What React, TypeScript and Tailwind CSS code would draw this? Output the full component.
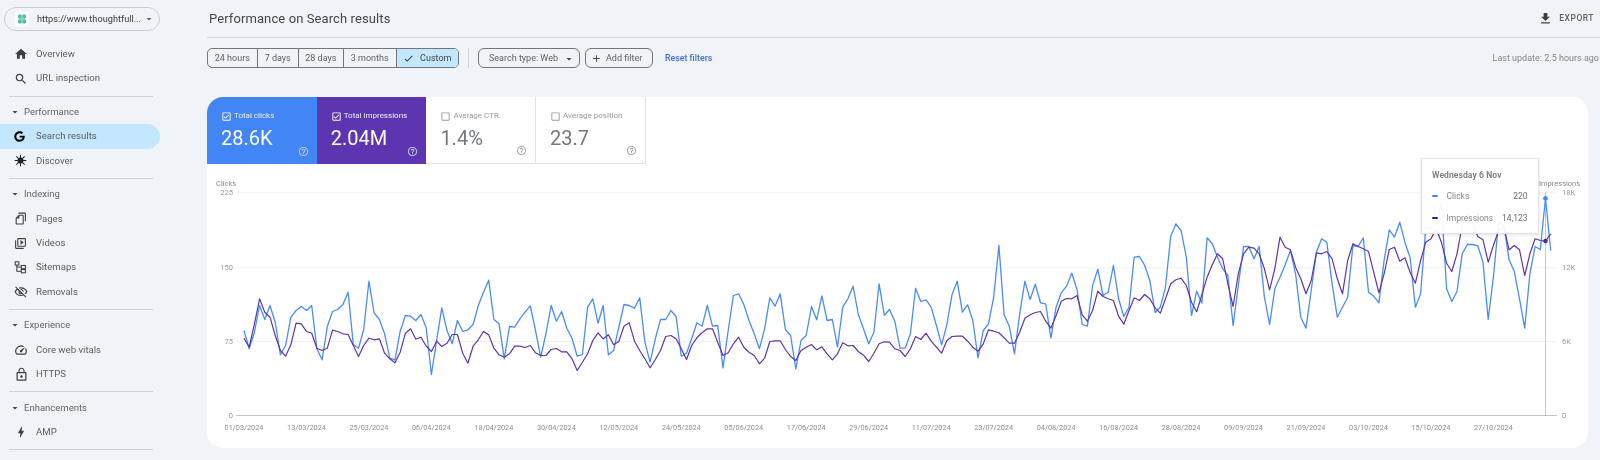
import React from "react";
import {
  MdHome, MdSearch, MdOutlineFileCopy, MdOutlineVideoLibrary, MdOutlineVisibilityOff, MdOutlineSpeed,
  MdLockOutline, MdBolt, MdArrowDropDown, MdFileDownload, MdHelpOutline, MdCheck, MdAdd,
  MdOutlineCheckBox, MdCheckBoxOutlineBlank,
} from "react-icons/md";
import { FaGoogle } from "react-icons/fa";

const blue = [
  { start: 0, ys: [480,535,485,405,447,405,455,553,525,440,420,408,420,405,535,568,468,423,417,402,365,522,533,478,332,427,447,490,563,568,482,435,437,450,432,472,612,510,412,480,520,450,483,478,462,405,365,329,447,460,565,468,470,445,425,406,480,560,490] },
  { start: 59, ys: [405,452,423,473,503,557,552,410,385,458,405,553,540,470,402,405,413,382,515,575,505,447,447,420,438,557,548,505,457,467,405,467,465,592,480,375,370,402,450,490,535,475,382,407,370,477,495,595,510,495,408,448,376,450,447,530,410,385,347,432,475,520,485,340,434,417,452] },
  { start: 126, ys: [533,533,490,353,393,388,410,465,523,463,373,332,425,403,450,562,480,460,380,225,433,467,550,430,332,387,341,397,400,503,410,367,347,308,357,462,467,345,296,375,365,285,385,438,410,260,258,284,330,426,410,350,198,160,180,260,435,362,398,202,220,260,295,315,465,345,228,228] },
  { start: 194, ys: [265,228,380,462,355,320,283,240,310,440,473,360,245,205,215,340,440,410,380,225,228,202,365,377,397,270,178,200,155,215,262,410,370,172,172,165,100,355,393,363,250,222,222,226,275,447,320,155,165,268,303,385,473,310,228,237,83,240] },
];
const purple = [
  { start: 0, ys: [503,530,460,385,425,440,495,540,557,522,458,460,483,488,533,540,533,479,483,490,492,525,558,525,503,508,505,548,565,577,545,488,475,506,500,527,543,512,528,518,492,492,548,578,527,508,483,493,533,553,560,550,527,527,531,525,547,555,555] },
  { start: 59, ys: [537,534,544,544,565,600,575,550,510,487,505,493,523,513,467,457,512,540,565,592,567,540,498,495,505,535,567,525,502,487,475,475,515,555,547,520,500,530,545,555,580,563,513,511,511,537,558,570,540,530,522,538,529,550,568,550,517,526,525,543,554,573,548,520,514,515,535] },
  { start: 126, ys: [540,558,535,498,507,488,512,530,548,511,498,497,497,512,530,542,520,478,482,487,502,518,518,485,443,433,426,423,452,473,435,392,384,385,375,433,452,420,362,378,385,390,437,461,420,382,390,372,385,412,428,385,340,328,323,345,395,424,372,320,283,250,265,340,408,310,250,230] },
  { start: 194, ys: [233,250,295,358,295,200,230,238,290,325,370,330,247,250,243,265,325,370,270,220,228,235,243,305,367,310,237,230,272,262,305,338,270,215,205,175,215,278,303,250,165,130,160,198,208,275,225,180,170,238,225,238,315,250,205,210,212,190] },
];

const toPoints = (segs: typeof blue) =>
  segs
    .flatMap((s) => s.ys.map((y, i) => `${(244 + 5.206 * (s.start + i)).toFixed(1)},${(170 + y / 3).toFixed(1)}`))
    .join(" ");

const dates = ["01/03/2024","13/03/2024","25/03/2024","06/04/2024","18/04/2024","30/04/2024","12/05/2024","24/05/2024","05/06/2024","17/06/2024","29/06/2024","11/07/2024","23/07/2024","04/08/2024","16/08/2024","28/08/2024","09/09/2024","21/09/2024","03/10/2024","15/10/2024","27/10/2024"];
const grid = [
  { y: 192.3, l: "225", r: "18K" },
  { y: 267.3, l: "150", r: "12K" },
  { y: 341, l: "75", r: "6K" },
  { y: 415, l: "0", r: "0" },
];

function SitemapIcon() {
  return (
    <svg viewBox="0 0 16 16" className="w-[13px] h-[13px]" fill="none" stroke="#3c4043" strokeWidth="1.3">
      <rect x="1.5" y="1" width="4.5" height="4" />
      <rect x="9" y="5.5" width="5" height="4" />
      <rect x="9" y="10.5" width="5" height="4" />
      <path d="M3.5 5v7.5H9M3.5 7.5H9" />
    </svg>
  );
}

function DiscoverIcon() {
  return (
    <svg viewBox="0 0 16 16" className="w-[13px] h-[13px]" fill="none" stroke="#222" strokeWidth="1.3">
      <path d="M8 .8v14.4M.8 8h14.4M2.9 2.9l10.2 10.2M13.1 2.9 2.9 13.1" />
      <circle cx="8" cy="8" r="3.6" fill="#222" stroke="none" />
    </svg>
  );
}

function Logo() {
  return (
    <svg viewBox="0 0 14 14" className="w-[14px] h-[14px] shrink-0 bg-white rounded-[2px]">
      <rect x="3" y="2.5" width="3.8" height="4.2" rx="1.3" fill="#55bfa6" />
      <rect x="7.2" y="2.5" width="3.8" height="4.2" rx="1.3" fill="#55bfa6" />
      <rect x="3" y="7.3" width="3.8" height="4.2" rx="1.3" fill="#55bfa6" />
      <rect x="7.2" y="7.3" width="3.8" height="4.2" rx="1.3" fill="#55bfa6" />
      <rect x="5.6" y="5.6" width="2.8" height="2.8" fill="#8fd8c6" />
    </svg>
  );
}

function NavRow({ icon, label, active }: { icon: React.ReactNode; label: string; active?: boolean }) {
  return (
    <div className={`h-[24.35px] w-[160px] flex items-center rounded-r-full text-[9.6px] text-[#5a5e63] ${active ? "bg-[#c2e7ff]" : ""}`}>
      <span className="w-[36px] pl-[14px] flex items-center text-[#3c4043]">{icon}</span>
      <span>{label}</span>
    </div>
  );
}

function Section({ label }: { label: string }) {
  return (
    <div className="h-[24.35px] flex items-center text-[9.5px] text-[#62666b]">
      <span className="w-[24px] pl-[9px] flex items-center"><MdArrowDropDown className="w-[12px] h-[12px] text-[#444]" /></span>
      <span>{label}</span>
    </div>
  );
}

function Divider() {
  return (
    <div className="h-[9.25px] pt-[5px] pl-[9px]">
      <div className="w-[144px] h-px bg-[#cfd2d6]" />
    </div>
  );
}

function Metric({ label, value, on, bg, border }: { label: string; value: string; on: boolean; bg: string; border: string }) {
  return (
    <div className={`relative h-[66.5px] w-[109.7px] pl-[14px] pt-[13px] ${bg} ${border}`}>
      <div className={`flex items-center gap-[2px] text-[8px] leading-[12px] ${on ? "text-[#eef2ff]" : "text-[#9a9a9a]"}`}>
        {on ? <MdOutlineCheckBox className="w-[11px] h-[11px] text-white" /> : <MdCheckBoxOutlineBlank className="w-[11px] h-[11px] text-[#9a9a9a]" />}
        <span>{label}</span>
      </div>
      <div className={`mt-[3px] text-[20px] leading-[26px] ${on ? "text-white" : "text-[#75787b]"}`}>{value}</div>
      <MdHelpOutline className={`absolute right-[8px] bottom-[7px] w-[11px] h-[11px] ${on ? "text-[#c5d3f5]" : "text-[#a5a5a5]"}`} />
    </div>
  );
}

export default function App() {
  return (
    <div className="flex w-[1600px] h-[460px] overflow-hidden bg-[#f0f4f9] font-['Roboto',sans-serif] blur-[0.35px]">
      <aside className="w-[207px] shrink-0 pt-[7px]">
        <div className="ml-[4px] w-[156px] h-[24px] rounded-full border border-[#c9ccd0] flex items-center pl-[10px] text-[9.2px] text-[#3c4043]">
          <Logo />
          <span className="ml-[8px] whitespace-nowrap">https://www.thoughtfull...</span>
          <MdArrowDropDown className="ml-[2px] w-[12px] h-[12px] text-[#666]" />
        </div>
        <nav className="mt-[11px]">
          <NavRow icon={<MdHome className="w-[14px] h-[14px]" />} label="Overview" />
          <NavRow icon={<MdSearch className="w-[14px] h-[14px]" />} label="URL inspection" />
          <Divider />
          <Section label="Performance" />
          <NavRow active icon={<FaGoogle className="w-[11px] h-[11px] text-black" />} label="Search results" />
          <NavRow icon={<DiscoverIcon />} label="Discover" />
          <Divider />
          <Section label="Indexing" />
          <NavRow icon={<MdOutlineFileCopy className="w-[13px] h-[13px] -scale-x-100" />} label="Pages" />
          <NavRow icon={<MdOutlineVideoLibrary className="w-[13px] h-[13px]" />} label="Videos" />
          <NavRow icon={<SitemapIcon />} label="Sitemaps" />
          <NavRow icon={<MdOutlineVisibilityOff className="w-[14px] h-[14px]" />} label="Removals" />
          <Divider />
          <Section label="Experience" />
          <NavRow icon={<MdOutlineSpeed className="w-[14px] h-[14px]" />} label="Core web vitals" />
          <NavRow icon={<MdLockOutline className="w-[15px] h-[15px]" />} label="HTTPS" />
          <Divider />
          <Section label="Enhancements" />
          <NavRow icon={<MdBolt className="w-[14px] h-[14px]" />} label="AMP" />
          <Divider />
        </nav>
      </aside>

      <main className="flex-1 min-w-0">
        <header className="h-[38px] border-b border-[#d5d8dc] flex items-center justify-between pl-[2px] pr-[6px]">
          <h1 className="text-[13px] text-[#444746] tracking-[0.1px]">Performance on Search results</h1>
          <div className="flex items-center gap-[6px] text-[8.5px] font-medium tracking-[0.5px] text-[#5f6368]">
            <MdFileDownload className="w-[15px] h-[15px] text-[#3c4043]" />
            <span>EXPORT</span>
          </div>
        </header>

        <div className="mt-[10px] h-[20px] flex items-center text-[9px] text-[#5f6368]">
          <div className="h-full w-[252px] flex rounded-[5px] border border-[#747775] overflow-hidden">
            <div className="h-full w-[49px] flex items-center justify-center pt-px">24 hours</div>
            <div className="h-full w-[41.5px] flex items-center justify-center border-l border-[#747775] pt-px">7 days</div>
            <div className="h-full w-[45.5px] flex items-center justify-center border-l border-[#747775] pt-px">28 days</div>
            <div className="h-full w-[53px] flex items-center justify-center border-l border-[#747775] pt-px">3 months</div>
            <div className="h-full w-[63px] flex items-center justify-center gap-[6px] border-l border-[#747775] bg-[#c2e7ff] pt-px">
              <MdCheck className="w-[11px] h-[11px] text-[#333]" />
              <span className="text-[#444]">Custom</span>
            </div>
          </div>
          <div className="ml-[9px] h-full w-px bg-[#d0d3d7]" />
          <div className="ml-[9px] h-full w-[102px] rounded-[6px] border border-[#747775] flex items-center pl-[10px] pt-px">
            <span>Search type: Web</span>
            <MdArrowDropDown className="ml-[5px] w-[12px] h-[12px] text-[#444]" />
          </div>
          <div className="ml-[5px] h-full w-[68px] rounded-[6px] border border-[#747775] flex items-center pl-[5px] gap-[4px] pt-px">
            <MdAdd className="w-[11px] h-[11px] text-[#444]" />
            <span>Add filter</span>
          </div>
          <span className="ml-[12px] text-[#3f6fd8] font-medium text-[8.8px] pt-px">Reset filters</span>
          <span className="ml-auto pr-[1px] text-[#80868b] text-[9px] pt-px">Last update: 2.5 hours ago</span>
        </div>

        <section className="relative mt-[29px] w-[1381px] h-[351px] bg-white rounded-[16px]">
          <div className="flex">
            <Metric label="Total clicks" value="28.6K" on bg="bg-[#4285f4]" border="rounded-tl-[16px]" />
            <Metric label="Total impressions" value="2.04M" on bg="bg-[#5e35b1]" border="" />
            <Metric label="Average CTR" value="1.4%" on={false} bg="bg-white" border="border-r border-b border-[#e3e3e3]" />
            <Metric label="Average position" value="23.7" on={false} bg="bg-white" border="border-r border-b border-[#e3e3e3]" />
          </div>
          <svg viewBox="207 163.5 1381 284" className="block w-[1381px] h-[284px] font-['Roboto',sans-serif]">
            {grid.map((g, i) => (
              <g key={g.y}>
                <line x1="236" x2="1557" y1={g.y} y2={g.y} stroke={i === 3 ? "#c4c6c8" : "#eeeeee"} strokeWidth={i === 3 ? 1 : 0.8} />
                <text x="233" y={g.y + 2.5} textAnchor="end" fontSize="7.5" fill="#9a9a9a">{g.l}</text>
                <text x="1562" y={g.y + 2.5} fontSize="7.5" fill="#9a9a9a">{g.r}</text>
              </g>
            ))}
            <text x="216" y="185.5" fontSize="7.5" fill="#8a8a8a">Clicks</text>
            <text x="1539" y="185.5" fontSize="7.5" fill="#8a8a8a">Impressions</text>
            {dates.map((d, i) => (
              <text key={d} x={244 + 62.47 * i} y="429.5" textAnchor="middle" fontSize="7.3" fill="#909090">{d}</text>
            ))}
            <line x1="1545.5" x2="1545.5" y1="192" y2="415" stroke="#777" strokeWidth="0.8" strokeDasharray="1 1" />
            <polyline points={toPoints(blue)} fill="none" stroke="#4a8cf7" strokeWidth="1.3" strokeLinejoin="round" />
            <polyline points={toPoints(purple)} fill="none" stroke="#5e35a8" strokeWidth="1.2" strokeLinejoin="round" />
            <circle cx="1545.5" cy="197.8" r="2.3" fill="#4285f4" />
            <circle cx="1545.5" cy="240.6" r="2.3" fill="#4c2a9e" />
          </svg>

          <div className="absolute left-[1214px] top-[61px] w-[117.5px] h-[76px] bg-white/95 border border-[#e4e4e4] shadow-[0_1px_3px_rgba(0,0,0,0.12)] pt-[10px] pl-[10px] pr-[10px] text-[8.5px] text-[#8a8a8a]">
            <div className="font-semibold text-[#7a7a7a] leading-[12px] tracking-[0.1px]">Wednesday 6 Nov</div>
            <div className="mt-[9px] flex items-center leading-[12px]">
              <span className="w-[6px] h-[2px] rounded-full bg-[#4285f4]" />
              <span className="ml-[8.5px]">Clicks</span>
              <span className="ml-auto text-[#6f6f6f]">220</span>
            </div>
            <div className="mt-[9.5px] flex items-center leading-[12px]">
              <span className="w-[6px] h-[2px] rounded-full bg-[#4a148c]" />
              <span className="ml-[8.5px]">Impressions</span>
              <span className="ml-auto text-[#6f6f6f]">14,123</span>
            </div>
          </div>
        </section>
      </main>
    </div>
  );
}
